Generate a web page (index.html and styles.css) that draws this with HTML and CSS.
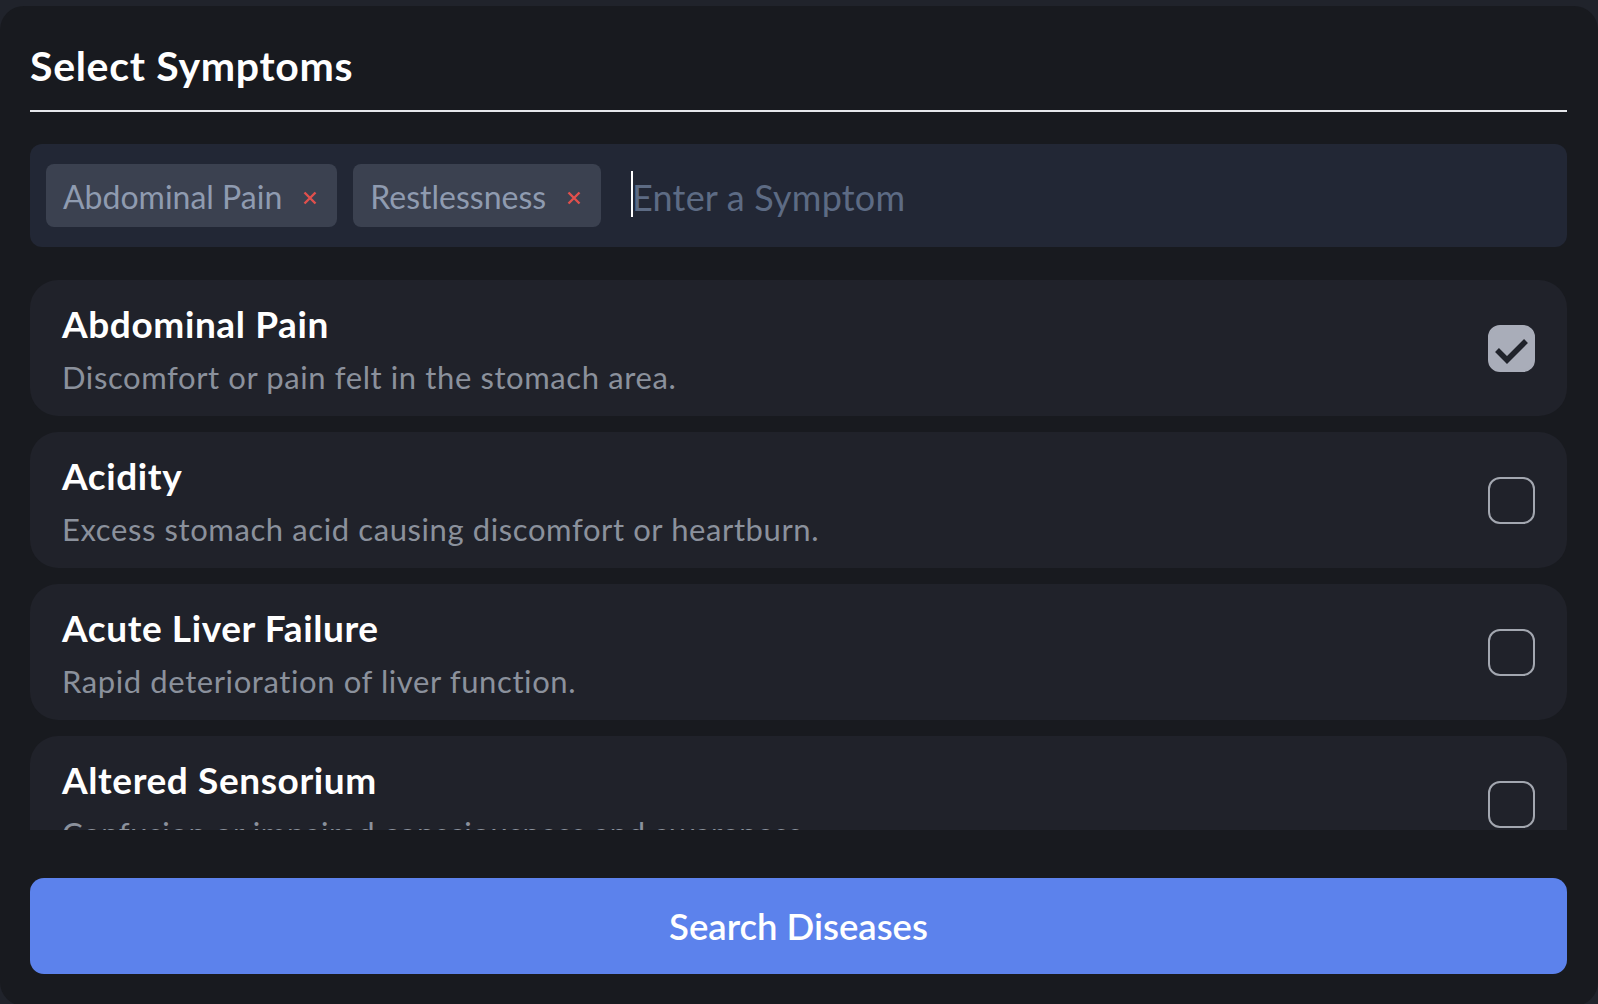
FILE: index.html
```html
<!DOCTYPE html>
<html lang="en">
<head>
<meta charset="utf-8">
<title>Select Symptoms</title>
<link rel="stylesheet" href="styles.css">
</head>
<body>
<div class="card">
  <h2 class="title">Select Symptoms</h2>
  <div class="tag-input">
    <span class="chip">Abdominal Pain
      <svg class="chip-x" viewBox="0 0 14 14" width="14" height="14"><path d="M1.5 1.5 L12.5 12.5 M12.5 1.5 L1.5 12.5" stroke="#e0504d" stroke-width="2.4" fill="none"/></svg>
    </span>
    <span class="chip">Restlessness
      <svg class="chip-x" viewBox="0 0 14 14" width="14" height="14"><path d="M1.5 1.5 L12.5 12.5 M12.5 1.5 L1.5 12.5" stroke="#e0504d" stroke-width="2.4" fill="none"/></svg>
    </span>
    <div class="entry">
      <span class="caret"></span>
      <input class="entry-input" type="text" placeholder="Enter a Symptom">
    </div>
  </div>
  <div class="list">
    <div class="item">
      <div class="item-text">
        <div class="item-title">Abdominal Pain</div>
        <div class="item-desc">Discomfort or pain felt in the stomach area.</div>
      </div>
      <span class="check checked">
        <svg viewBox="0 0 47 47" width="47" height="47"><polyline points="9,25 19,35 38,16" fill="none" stroke="#20232b" stroke-width="5.5"/></svg>
      </span>
    </div>
    <div class="item">
      <div class="item-text">
        <div class="item-title">Acidity</div>
        <div class="item-desc">Excess stomach acid causing discomfort or heartburn.</div>
      </div>
      <span class="check"></span>
    </div>
    <div class="item">
      <div class="item-text">
        <div class="item-title">Acute Liver Failure</div>
        <div class="item-desc">Rapid deterioration of liver function.</div>
      </div>
      <span class="check"></span>
    </div>
    <div class="item">
      <div class="item-text">
        <div class="item-title">Altered Sensorium</div>
        <div class="item-desc">Confusion or impaired consciousness and awareness.</div>
      </div>
      <span class="check"></span>
    </div>
  </div>
  <button class="search-btn" type="button">Search Diseases</button>
</div>
</body>
</html>
```

FILE: styles.css
```css
html, body {
  margin: 0;
  padding: 0;
  background: #20232b;
  overflow: hidden;
  font-family: "Lato", "Open Sans", sans-serif;
}

.card {
  box-sizing: border-box;
  margin-top: 6px;
  width: 1598px;
  height: 1000px;
  background: #181a1f;
  border-radius: 24px;
  padding: 36px 31px 30px 30px;
  display: flex;
  flex-direction: column;
}

.title {
  margin: 0;
  font-size: 41px;
  letter-spacing: 0.7px;
  line-height: 48px;
  font-weight: 700;
  color: #ffffff;
  padding-bottom: 20px;
  border-bottom: 2px solid #e5e7eb;
}

.tag-input {
  margin-top: 32px;
  background: #222735;
  border-radius: 12px;
  padding: 20px 16px;
  display: flex;
  align-items: center;
  gap: 16px;
}

.chip {
  height: 63px;
  box-sizing: border-box;
  display: inline-flex;
  align-items: center;
  gap: 21px;
  padding: 3px 20px 0 17px;
  background: #3b4150;
  border-radius: 8px;
  color: #8f9bb0;
  font-size: 32px;
  line-height: 42px;
  white-space: nowrap;
}

.chip-x {
  flex: none;
  margin-top: 1px;
}

.entry {
  position: relative;
  flex: 1;
  margin-left: 14px;
  display: flex;
  align-items: center;
}

.caret {
  position: absolute;
  left: 0;
  top: -2px;
  width: 2px;
  height: 46px;
  background: #ffffff;
}

.entry-input {
  width: 100%;
  border: 0;
  outline: none;
  background: transparent;
  padding: 2px 0 0 1px;
  margin: 0;
  font-family: inherit;
  font-size: 36px;
  letter-spacing: 0.2px;
  line-height: 44px;
  height: 46px;
  box-sizing: border-box;
  color: #e5e7eb;
}

.entry-input::placeholder {
  color: #5d6b84;
  opacity: 1;
}

.list {
  margin-top: 33px;
  height: 550px;
  flex: none;
  overflow-y: auto;
  scrollbar-width: none;
  display: flex;
  flex-direction: column;
  gap: 16px;
}

.item {
  flex: none;
  display: flex;
  align-items: center;
  justify-content: space-between;
  background: #20222a;
  border-radius: 28px;
  padding: 23px 32px 21px 32px;
}

.item-text {
  display: flex;
  flex-direction: column;
}

.item-title {
  font-size: 37px;
  letter-spacing: 0.6px;
  line-height: 42px;
  font-weight: 700;
  color: #ffffff;
}

.item-desc {
  margin-top: 14px;
  font-size: 31px;
  letter-spacing: 0.6px;
  line-height: 36px;
  color: #8b919c;
}

.check {
  flex: none;
  box-sizing: border-box;
  width: 47px;
  height: 47px;
  border-radius: 12px;
  border: 2px solid #a3a7b0;
  margin-top: -2px;
}

.check.checked {
  background: #a9adb9;
  border-color: #a9adb9;
  display: flex;
  align-items: center;
  justify-content: center;
}

.check.checked svg {
  display: block;
  margin: -2px;
}

.search-btn {
  margin-top: 48px;
  height: 96px;
  flex: none;
  border: 0;
  border-radius: 14px;
  background: #5c82ec;
  color: #ffffff;
  font-family: inherit;
  font-size: 36.5px;
  font-weight: 600;
}
```
